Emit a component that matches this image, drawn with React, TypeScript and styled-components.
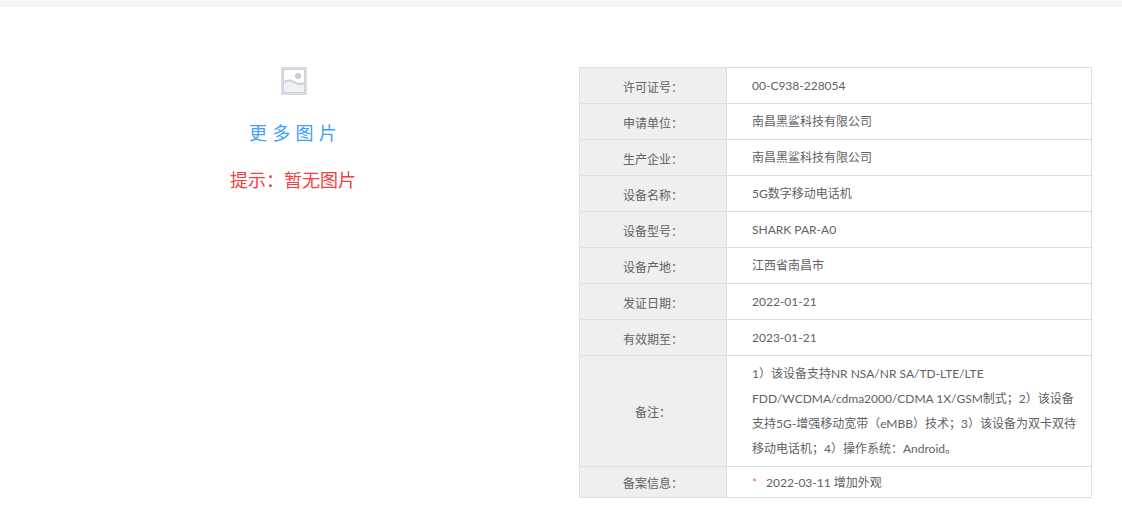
import React from 'react';
import styled, { createGlobalStyle } from 'styled-components';

const GlobalStyle = createGlobalStyle`
html, body {
  margin: 0;
  padding: 0;
  background: #fff;
  font-family: "Lato", "Noto Sans CJK SC", sans-serif;
}
`

const TopBar = styled.div`
height: 7px;
background: #f5f5f5;
`

const Content = styled.div`
display: flex;
align-items: flex-start;
padding: 60px 30px 0 0;
`

const PicturePanel = styled.div`
width: 568px;
margin-right: 2px;
padding-left: 9px;
display: flex;
flex-direction: column;
align-items: center;
`

const Placeholder = styled.svg`
display: block;
width: 26px;
height: 28px;
margin-left: 2px;
`

const MoreLink = styled.a`
margin-top: 24px;
font-size: 18px;
line-height: 28px;
letter-spacing: 5.3px;
color: #409eff;
margin-right: -5px;
`

const Hint = styled.div`
margin-top: 19px;
font-size: 18px;
line-height: 28px;
color: #f33f3f;
`

const InfoTable = styled.table`
width: 513px;
table-layout: fixed;
border-collapse: collapse;
font-size: 12px;
color: #606266;
`

const Row = styled.tr<{ $height: number }>`
height: ${p => p.$height}px;
`

const Label = styled.th`
width: 146px;
padding: 1px 0 0;
border: 1px solid #dfdfdf;
background: #efefef;
font-weight: 400;
text-align: center;
`

const Value = styled.td`
padding: 0 10px 0 25px;
border: 1px solid #dfdfdf;
line-height: 25px;
`

const Star = styled.span`
color: #f56c6c;
margin-right: 9px;
`

const rows = [
  ['许可证号：', '00-C938-228054'],
  ['申请单位：', '南昌黑鲨科技有限公司'],
  ['生产企业：', '南昌黑鲨科技有限公司'],
  ['设备名称：', '5G数字移动电话机'],
  ['设备型号：', 'SHARK PAR-A0'],
  ['设备产地：', '江西省南昌市'],
  ['发证日期：', '2022-01-21'],
  ['有效期至：', '2023-01-21'],
];

function App() {
  return (
    <>
      <GlobalStyle />
      <TopBar />
      <Content>
        <PicturePanel>
          <Placeholder viewBox="0 0 26 28">
            <rect width="26" height="28" fill="#dcdcdc" />
            <rect x="2" y="2" width="22" height="24" fill="#c8d0dc" />
            <rect x="3" y="3" width="20" height="22" fill="#eef1f6" />
            <path d="M3 3h20v12c-4 2-7 1-10-1s-6-2-10 0z" fill="#fff" />
            <path d="M3 14c4-2 7-2 10 0s6 3 10 1v2c-4 2-7 1-10-1s-6-2-10 0z" fill="#c8d0dc" />
            <circle cx="17" cy="9" r="3" fill="#c3cbd8" />
          </Placeholder>
          <MoreLink>更多图片</MoreLink>
          <Hint>提示：暂无图片</Hint>
        </PicturePanel>
        <InfoTable>
          <tbody>
            {rows.map(([label, value]) => (
              <Row key={label} $height={36}>
                <Label>{label}</Label>
                <Value>{value}</Value>
              </Row>
            ))}
            <Row $height={111}>
              <Label>备注：</Label>
              <Value>1）该设备支持NR NSA/NR SA/TD-LTE/LTE FDD/WCDMA/cdma2000/CDMA 1X/GSM制式；2）该设备支持5G-增强移动宽带（eMBB）技术；3）该设备为双卡双待移动电话机；4）操作系统：Android。</Value>
            </Row>
            <Row $height={31}>
              <Label>备案信息：</Label>
              <Value><Star>*</Star>2022-03-11 增加外观</Value>
            </Row>
          </tbody>
        </InfoTable>
      </Content>
    </>
  );
}

export default App;
